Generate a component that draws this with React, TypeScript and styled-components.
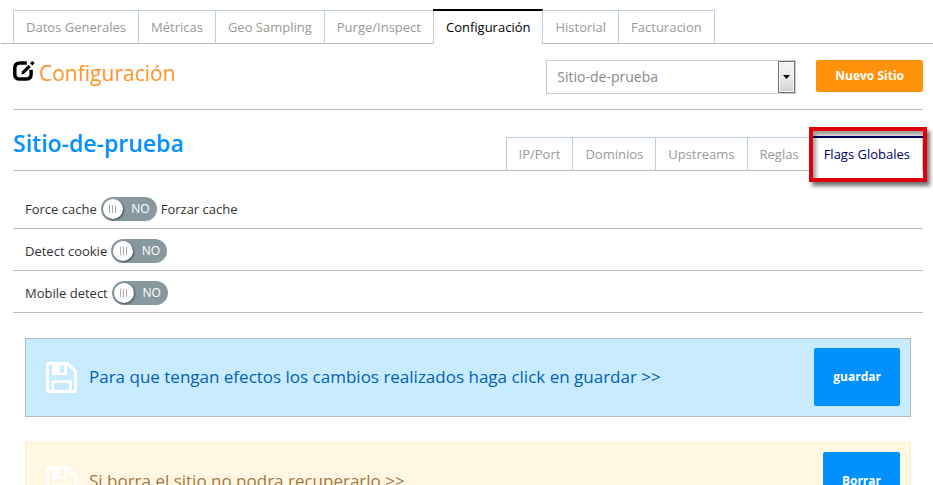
import React, { useState } from "react";
import styled, { createGlobalStyle, css } from "styled-components";

const GlobalStyle = createGlobalStyle`
  *, *::before, *::after { box-sizing: border-box; }
  html { scrollbar-width: none; }
  body {
    margin: 0;
    background: #fff;
    color: #333;
    font: 13px/20px "Open Sans", sans-serif;
  }
`;

const Page = styled.div`
  padding: 10px 0 24px;
`;

const Content = styled.main`
  padding: 0 10px 0 13px;
`;

const MainNav = styled.nav`
  display: flex;
  margin-left: 1px;
  padding-left: 12px;
  border-bottom: 1px solid #b9bcbe;
`;

const SubNav = styled.nav`
  display: flex;
`;

const Tab = styled.a<{ $active?: boolean; $accent?: string }>`
  position: relative;
  height: 34px;
  padding: 6px 12px 0;
  margin-bottom: -1px;
  border: 1px solid #bccddd;
  border-right-width: 0;
  border-bottom-color: #b9bcbe;
  color: #999;
  text-decoration: none;
  white-space: nowrap;
  &:last-child { border-right-width: 1px; }
  ${(p) =>
    p.$active &&
    css`
      color: ${p.$accent};
      background: #fff;
      border-bottom-color: #fff;
      &::before {
        content: "";
        position: absolute;
        top: -2px;
        left: -1px;
        right: -1px;
        height: 2px;
        background: ${p.$accent};
      }
    `}
`;

const Highlight = styled.span`
  position: absolute;
  inset: -11px -5px -12px -3px;
  border: 4px solid #e0000b;
  box-shadow: 3px 4px 4px rgba(0, 0, 0, 0.55), inset 3px 4px 4px rgba(0, 0, 0, 0.4);
  pointer-events: none;
`;

const Header = styled.header`
  display: flex;
  align-items: flex-start;
  height: 66px;
  padding-top: 16px;
  border-bottom: 1px solid #b9bcbe;
`;

const Title = styled.h1`
  display: flex;
  align-items: flex-start;
  gap: 4px;
  margin: 0 auto 0 0;
  color: #ff931e;
  font-size: 21px;
  font-weight: 400;
  line-height: 26px;
`;

const SelectBox = styled.div`
  position: relative;
  width: 250px;
  height: 34px;
  margin-right: 20px;
`;

const Select = styled.select`
  appearance: none;
  width: 100%;
  height: 100%;
  padding: 0 28px 0 10px;
  border: 1px solid #ccc;
  border-radius: 0;
  background: #fff;
  color: #888;
  font: 14px/20px "Open Sans", sans-serif;
`;

const SelectArrow = styled.span`
  position: absolute;
  top: 1px;
  right: 1px;
  bottom: 1px;
  width: 17px;
  display: grid;
  place-items: center;
  border: 1px solid #707070;
  box-shadow: inset 0 0 0 1px #f8f8f8;
  background: linear-gradient(#f2f2f2, #ebebeb 50%, #cfcfcf);
  pointer-events: none;
`;

const Button = styled.button<{ $tone: "orange" | "blue"; $tall?: boolean }>`
  height: ${(p) => (p.$tall ? "58px" : "32px")};
  padding: 0 19px;
  border: 0;
  border-radius: 2px;
  background: ${(p) => (p.$tone === "orange" ? "#ff920a" : "#0090ff")};
  color: #fff;
  font: 700 12px/20px "Open Sans", sans-serif;
  cursor: pointer;
`;

const SiteHeader = styled.div`
  display: flex;
  justify-content: space-between;
  align-items: flex-end;
  height: 61px;
  border-bottom: 1px solid #b9bcbe;
`;

const SiteName = styled.h2`
  margin: 0 0 11px;
  color: #0090ff;
  font-size: 23px;
  font-weight: 600;
  line-height: 32px;
`;

const Flags = styled.div`
  padding-top: 16px;
`;

const FlagRow = styled.label`
  display: flex;
  align-items: center;
  gap: 4px;
  height: 42px;
  padding: 2px 12px 0;
  border-bottom: 1px solid #b9bcbe;
  cursor: pointer;
`;

const HiddenCheck = styled.input`
  position: absolute;
  opacity: 0;
  pointer-events: none;
`;

const Track = styled.span<{ $on: boolean }>`
  display: flex;
  flex-direction: ${(p) => (p.$on ? "row-reverse" : "row")};
  align-items: center;
  justify-content: space-between;
  width: 56px;
  height: 24px;
  padding: ${(p) => (p.$on ? "0 2px 0 7px" : "0 7px 0 2px")};
  border-radius: 12px;
  background: ${(p) => (p.$on ? "#0090ff" : "#87999f")};
  color: #fff;
  font-size: 12px;
`;

const Knob = styled.span`
  display: flex;
  align-items: center;
  justify-content: center;
  gap: 2px;
  width: 20px;
  height: 20px;
  border-radius: 50%;
  background: #fff;
  box-shadow: 1px 1px 2px rgba(0, 0, 0, 0.5);
`;

const Grip = styled.i`
  width: 1px;
  height: 8px;
  background: #aaa;
`;

const Alerts = styled.div`
  display: grid;
  gap: 25px;
  padding: 25px 12px 0;
`;

const Alert = styled.section<{ $tone: "info" | "warning" }>`
  display: flex;
  align-items: center;
  gap: 12px;
  height: 79px;
  padding: 0 10px 1px 20px;
  border: 1px solid ${(p) => (p.$tone === "info" ? "#b8bcbf" : "#fdebcb")};
  background: ${(p) => (p.$tone === "info" ? "#c9ebff" : "#fff7e1")};
  color: ${(p) => (p.$tone === "info" ? "#0062b5" : "#a07843")};
`;

const AlertText = styled.p`
  margin: 0 auto 0 0;
  font-size: 17px;
  line-height: 24px;
`;

function EditIcon() {
  return (
    <svg width="22" height="22" viewBox="0 0 22 22" aria-hidden="true">
      <path
        d="M13.8 3.1H7Q1.8 3.1 1.8 8V14.2Q1.8 19.1 7 19.1H13Q18.1 19.1 18.1 14.2V9.8"
        fill="none"
        stroke="#000"
        strokeWidth="3.5"
      />
      <path d="M8.2 14.6L9.2 11.2L15.6 4.8L17.8 7L11.6 13.4Z" fill="#000" />
      <path d="M17 3.4L18.7 1.6Q19.3 .9 19.9 1.5L21.2 2.6Q21.7 3.2 21.2 3.8L19.4 5.6Z" fill="#000" />
    </svg>
  );
}

function SaveIcon() {
  return (
    <svg width="31" height="31" viewBox="0 0 31 31" aria-hidden="true">
      <path
        d="M2.8 1.5H21.5L29.5 9.5V28.2Q29.5 29.5 28.2 29.5H2.8Q1.5 29.5 1.5 28.2V2.8Q1.5 1.5 2.8 1.5Z"
        fill="none"
        stroke="#fff"
        strokeWidth="3"
      />
      <path d="M6 1H21V11.5Q21 13 19.5 13H7.5Q6 13 6 11.5ZM13.5 3.5V10.5H18V3.5Z" fill="#fff" fillRule="evenodd" />
      <path d="M6.7 30V19.6H24.6V30" fill="none" stroke="#fff" strokeWidth="2.8" strokeLinejoin="round" />
    </svg>
  );
}

function Flag({ name, note }: { name: string; note?: string }) {
  const [on, setOn] = useState(false);
  return (
    <FlagRow>
      <span>{name}</span>
      <HiddenCheck type="checkbox" checked={on} onChange={(e) => setOn(e.target.checked)} />
      <Track $on={on}>
        <Knob>
          <Grip />
          <Grip />
          <Grip />
        </Knob>
        <span>{on ? "SI" : "NO"}</span>
      </Track>
      {note && <span>{note}</span>}
    </FlagRow>
  );
}

const mainTabs = ["Datos Generales", "Métricas", "Geo Sampling", "Purge/Inspect", "Configuración", "Historial", "Facturacion"];
const siteTabs = ["IP/Port", "Dominios", "Upstreams", "Reglas", "Flags Globales"];

export default function App() {
  return (
    <Page>
      <GlobalStyle />
      <MainNav>
        {mainTabs.map((t) => (
          <Tab key={t} href="#" $active={t === "Configuración"} $accent="#000">
            {t}
          </Tab>
        ))}
      </MainNav>
      <Content>
        <Header>
          <Title>
            <EditIcon />
            Configuración
          </Title>
          <SelectBox>
            <Select aria-label="Sitio">
              <option>Sitio-de-prueba</option>
            </Select>
            <SelectArrow>
              <svg width="7" height="4" viewBox="0 0 7 4" aria-hidden="true">
                <path d="M0 0H7L3.5 4Z" fill="#000" />
              </svg>
            </SelectArrow>
          </SelectBox>
          <Button $tone="orange">Nuevo Sitio</Button>
        </Header>
        <SiteHeader>
          <SiteName>Sitio-de-prueba</SiteName>
          <SubNav>
            {siteTabs.map((t) => (
              <Tab key={t} href="#" $active={t === "Flags Globales"} $accent="#000066">
                {t}
                {t === "Flags Globales" && <Highlight />}
              </Tab>
            ))}
          </SubNav>
        </SiteHeader>
        <Flags>
          <Flag name="Force cache" note="Forzar cache" />
          <Flag name="Detect cookie" />
          <Flag name="Mobile detect" />
        </Flags>
        <Alerts>
          <Alert $tone="info">
            <SaveIcon />
            <AlertText>Para que tengan efectos los cambios realizados haga click en guardar &gt;&gt;</AlertText>
            <Button $tone="blue" $tall>guardar</Button>
          </Alert>
          <Alert $tone="warning">
            <SaveIcon />
            <AlertText>Si borra el sitio no podra recuperarlo &gt;&gt;</AlertText>
            <Button $tone="blue" $tall>Borrar</Button>
          </Alert>
        </Alerts>
      </Content>
    </Page>
  );
}
